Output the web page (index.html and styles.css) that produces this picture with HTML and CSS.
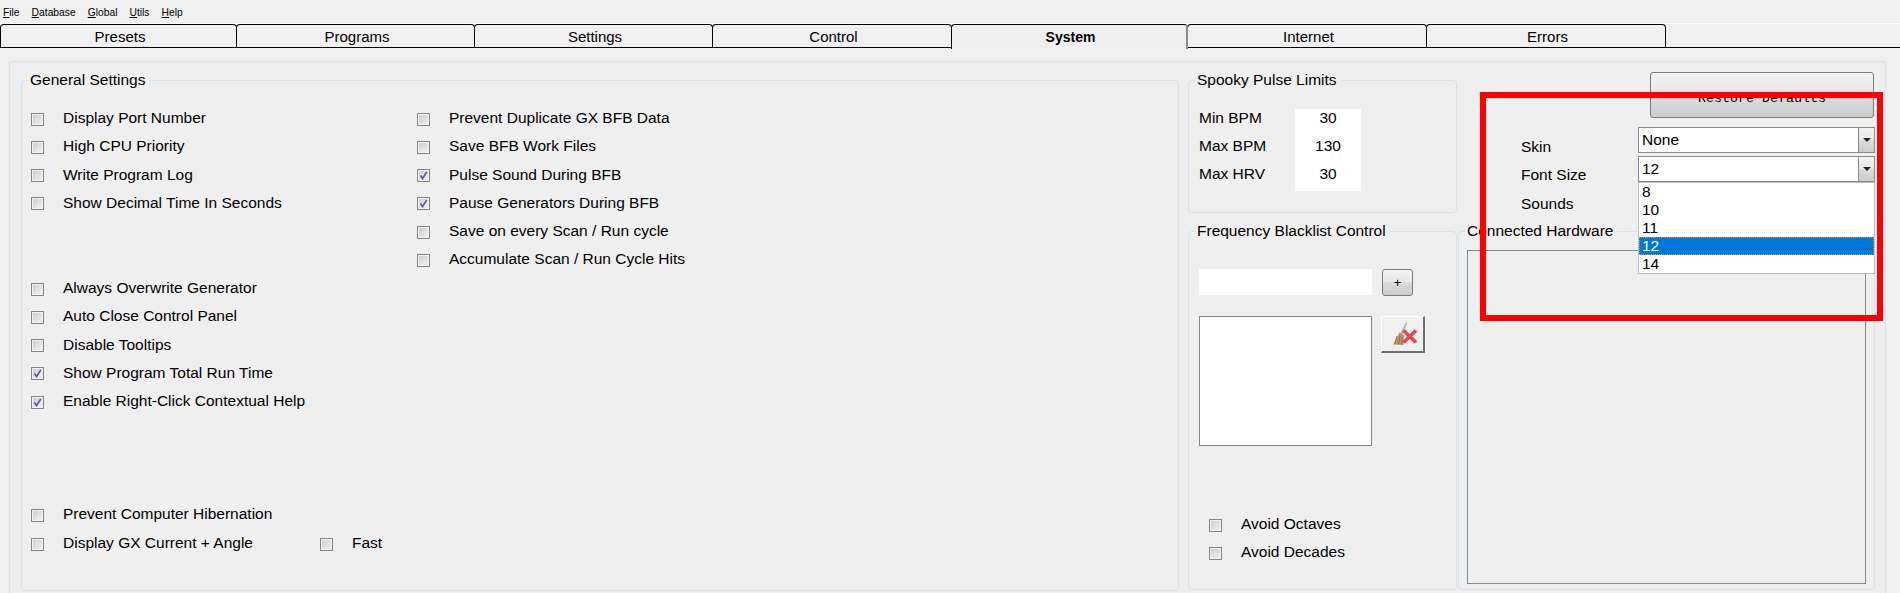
FILE: index.html
```html
<!DOCTYPE html>
<html lang="en">
<head>
<meta charset="utf-8">
<title>System</title>
<link rel="stylesheet" href="styles.css">
</head>
<body>
<nav class="menu">
  <span><u>F</u>ile</span><span><u>D</u>atabase</span><span><u>G</u>lobal</span><span><u>U</u>tils</span><span><u>H</u>elp</span>
</nav>
<div class="tabs">
  <div class="tab">Presets</div>
  <div class="tab">Programs</div>
  <div class="tab">Settings</div>
  <div class="tab">Control</div>
  <div class="tab active">System</div>
  <div class="tab">Internet</div>
  <div class="tab">Errors</div>
</div>
<main class="panel">
  <section class="group general">
    <div class="legend">General Settings</div>
    <div class="general-cols">
      <div class="col col-a">
        <div class="row"><span class="box"></span><span class="txt">Display Port Number</span></div>
        <div class="row"><span class="box"></span><span class="txt">High CPU Priority</span></div>
        <div class="row"><span class="box"></span><span class="txt">Write Program Log</span></div>
        <div class="row"><span class="box"></span><span class="txt">Show Decimal Time In Seconds</span></div>
        <div class="row sep-a"><span class="box"></span><span class="txt">Always Overwrite Generator</span></div>
        <div class="row"><span class="box"></span><span class="txt">Auto Close Control Panel</span></div>
        <div class="row"><span class="box"></span><span class="txt">Disable Tooltips</span></div>
        <div class="row"><span class="box checked"><svg viewBox="0 0 11 11"><path d="M2.5 5.5 L4.6 8.5 L8.8 1.8" fill="none" stroke="#4d5a9c" stroke-width="1.6"/></svg></span><span class="txt">Show Program Total Run Time</span></div>
        <div class="row"><span class="box checked"><svg viewBox="0 0 11 11"><path d="M2.5 5.5 L4.6 8.5 L8.8 1.8" fill="none" stroke="#4d5a9c" stroke-width="1.6"/></svg></span><span class="txt">Enable Right-Click Contextual Help</span></div>
        <div class="row sep-b"><span class="box"></span><span class="txt">Prevent Computer Hibernation</span></div>
        <div class="row tall">
          <div class="pair"><span class="box"></span><span class="txt">Display GX Current + Angle</span></div>
          <span class="box"></span><span class="txt">Fast</span>
        </div>
      </div>
      <div class="col">
        <div class="row"><span class="box"></span><span class="txt">Prevent Duplicate GX BFB Data</span></div>
        <div class="row"><span class="box"></span><span class="txt">Save BFB Work Files</span></div>
        <div class="row"><span class="box checked"><svg viewBox="0 0 11 11"><path d="M2.5 5.5 L4.6 8.5 L8.8 1.8" fill="none" stroke="#4d5a9c" stroke-width="1.6"/></svg></span><span class="txt">Pulse Sound During BFB</span></div>
        <div class="row"><span class="box checked"><svg viewBox="0 0 11 11"><path d="M2.5 5.5 L4.6 8.5 L8.8 1.8" fill="none" stroke="#4d5a9c" stroke-width="1.6"/></svg></span><span class="txt">Pause Generators During BFB</span></div>
        <div class="row"><span class="box"></span><span class="txt">Save on every Scan / Run cycle</span></div>
        <div class="row"><span class="box"></span><span class="txt">Accumulate Scan / Run Cycle Hits</span></div>
      </div>
    </div>
  </section>

  <div class="right">
    <section class="group spooky">
      <div class="legend">Spooky Pulse Limits</div>
      <div class="limits">
        <div class="limit-names"><div>Min BPM</div><div>Max BPM</div><div>Max HRV</div></div>
        <div class="limit-values"><div>30</div><div>130</div><div>30</div></div>
      </div>
    </section>

    <section class="options">
      <button class="restore" type="button">Restore Defaults</button>
      <div class="option-body">
        <div class="option-names"><div>Skin</div><div>Font Size</div><div>Sounds</div></div>
        <div class="combos">
          <div class="combo"><span class="combo-text">None</span><span class="combo-arrow"><i></i></span></div>
          <div class="combo open"><span class="combo-text">12</span><span class="combo-arrow"><i></i></span>
            <ul class="dropdown">
              <li>8</li><li>10</li><li>11</li><li class="selected">12</li><li>14</li>
            </ul>
          </div>
        </div>
      </div>
    </section>

    <section class="group freq">
      <div class="legend">Frequency Blacklist Control</div>
      <div class="freq-add">
        <div class="freq-input"></div>
        <button class="plus" type="button">+</button>
      </div>
      <div class="freq-list-row">
        <div class="freq-list"></div>
        <button class="broom" type="button" aria-label="Clear list">
          <svg width="42" height="35" viewBox="0 0 42 35">
            <path d="M24 5 L25.5 6 L20 18 L18 17 Z" fill="#c7b49c"/>
            <path d="M17.5 15.5 L22 18 L21.5 28 L11 27.5 Z" fill="#b9976a"/>
            <path d="M15 19 L13 27 M18 19 L16.5 27.5 M20 20 L19.5 27.5" stroke="#95744a" stroke-width="1" fill="none"/>
            <path d="M21.5 13.5 L34 25.5 M34 13.5 L21.5 25.5" stroke="#df4850" stroke-width="3.6" fill="none"/>
          </svg>
        </button>
      </div>
      <div class="avoid">
        <div class="row"><span class="box"></span><span class="txt">Avoid Octaves</span></div>
        <div class="row"><span class="box"></span><span class="txt">Avoid Decades</span></div>
      </div>
    </section>

    <section class="group hardware">
      <div class="legend">Connected Hardware</div>
      <div class="hw-box"></div>
    </section>
  </div>
</main>
<div class="highlight"></div>
</body>
</html>
```
FILE: styles.css
```css
* { box-sizing: border-box; }
html, body { margin: 0; padding: 0; }
body {
  width: 1900px;
  height: 593px;
  overflow: hidden;
  position: relative;
  background: #f0f0f0;
  color: #000;
  font-family: "Liberation Sans", Arial, sans-serif;
  font-size: 15.5px;
}

.menu {
  height: 24px;
  display: flex;
  gap: 12px;
  padding: 1px 0 0 3px;
  font-size: 10.3px;
  line-height: 23px;
  border-bottom: 1px solid #fff;
}
.menu u { text-decoration: underline; }

.tabs {
  height: 24px;
  display: grid;
  padding-left: 1px;
  grid-template-columns: 236px 238px 238px 239px 236px 239px 239px 1fr;
  border-bottom: 1px solid #000;
}
.tab {
  height: 23px;
  border-top: 1px solid #000;
  border-right: 1px solid #000;
  border-left: 1px solid #000;
  border-radius: 4px 4px 0 0;
  margin-left: -1px;
  padding-left: 3px;
  text-align: center;
  font-size: 15px;
  line-height: 24px;
  background: #f0f0f0;
}
.tab.active {
  position: relative;
  height: 25px;
  font-weight: bold;
  font-size: 14px;
  border-left: 1px solid #000;
  border-right: 2px solid #8a8a8a;
  background: #efefef;
}

.panel {
  margin: 13px 14px 0 9px;
  height: 560px;
  padding: 18px 9px 0 11px;
  border: 1px solid #d9e3ec;
  border-bottom: 0;
  border-radius: 4px 4px 0 0;
  background: #efefef;
  display: flex;
  gap: 9px;
  align-items: flex-start;
}

.group {
  border: 1px solid #d9e3ec;
  border-radius: 4px;
}
.legend {
  width: fit-content;
  height: 18px;
  line-height: 18px;
  margin: -10px 0 0 7px;
  padding: 0 4px 0 1px;
  background: #efefef;
}

.general { width: 1158px; height: 511px; }
.general-cols {
  display: flex;
  margin-top: 15px;
  padding-left: 9px;
}
.col-a { width: 386px; }
.row {
  display: flex;
  align-items: center;
  height: 28.25px;
}
.row.tall { height: 29px; margin-top: 0; }
.sep-a { margin-top: 57px; }
.sep-b { margin-top: 85px; }
.pair { display: flex; align-items: center; width: 289px; }
.box {
  flex: none;
  display: block;
  width: 13px;
  height: 13px;
  margin-top: 2px;
  border: 1px solid #858585;
  background: linear-gradient(135deg, #c9c9c9, #f6f6f6);
  box-shadow: inset 0 0 0 1px #f2f2f2;
}
.box svg { display: block; width: 11px; height: 11px; }
.txt { margin-left: 19px; white-space: nowrap; }

.right {
  display: grid;
  grid-template-columns: 269px 417px;
  grid-template-rows: 133px 359px;
  column-gap: 1px;
  row-gap: 18px;
}

.limits {
  display: flex;
  margin-top: 20px;
  padding-left: 10px;
  line-height: 18px;
}
.limit-names { width: 96px; display: flex; flex-direction: column; gap: 10px; }
.limit-values {
  width: 66px;
  height: 82px;
  background: #fff;
  text-align: center;
  display: flex;
  flex-direction: column;
  gap: 10px;
}

.options { display: flex; flex-direction: column; }
.restore {
  align-self: flex-end;
  width: 224px;
  height: 46px;
  margin: -8px 1px 0 0;
  padding: 7px 0 0;
  border: 1px solid #7c7c7c;
  border-radius: 3px;
  background: linear-gradient(#f2f2f2, #e9e9e9 50%, #dcdcdc 50%, #cdcdcd);
  font-family: "Liberation Mono", "Courier New", monospace;
  font-size: 13.33px;
  font-weight: normal;
  color: #000;
}
.option-body { display: flex; }
.option-names {
  width: 179px;
  padding: 20px 0 0 63px;
  line-height: 18px;
  display: flex;
  flex-direction: column;
  gap: 10.3px;
}
.combos {
  width: 237px;
  margin-left: 1px;
  padding-top: 9px;
  display: flex;
  flex-direction: column;
  gap: 3px;
}
.combo {
  position: relative;
  height: 26px;
  border: 1px solid #868a91;
  background: #fff;
  display: flex;
  justify-content: space-between;
  line-height: 24px;
}
.combo-text { padding-left: 3px; }
.combo-arrow {
  width: 16px;
  border-left: 1px solid #868a91;
  background: linear-gradient(#f2f2f2, #e9e9e9 50%, #dcdcdc 50%, #cdcdcd);
  display: flex;
  align-items: center;
  justify-content: center;
}
.combo-arrow i {
  display: block;
  width: 0;
  height: 0;
  border-left: 4px solid transparent;
  border-right: 4px solid transparent;
  border-top: 4px solid #222;
}
.dropdown {
  position: absolute;
  left: -1px;
  top: 25px;
  width: 237px;
  margin: 0;
  padding: 0;
  list-style: none;
  height: 92px;
  background: #fff;
  border: 1px solid #bdbdbd;
}
.dropdown li {
  height: 18px;
  line-height: 18px;
  padding-left: 3px;
}
.dropdown li.selected {
  background: #0078d7;
  color: #fff;
  outline: 1px dotted #e58a2e;
  outline-offset: -1px;
}

.freq-add {
  display: flex;
  margin-top: 29px;
  padding-left: 10px;
}
.freq-input { width: 173px; height: 26px; background: #fff; }
.plus {
  width: 31px;
  height: 27px;
  margin: 0 0 0 10px;
  padding: 0;
  border: 1px solid #7c7c7c;
  border-radius: 3px;
  background: linear-gradient(#f2f2f2, #e9e9e9 50%, #dcdcdc 50%, #cdcdcd);
  font-family: "Liberation Sans", Arial, sans-serif;
  font-size: 13px;
  color: #000;
}
.freq-list-row {
  display: flex;
  margin-top: 20px;
  padding-left: 10px;
}
.freq-list {
  width: 173px;
  height: 130px;
  background: #fff;
  border: 1px solid #808890;
}
.broom {
  width: 44px;
  height: 37px;
  margin-left: 9px;
  padding: 0;
  background: #f0f0f0;
  border-style: solid;
  border-width: 1px 2px 2px 1px;
  border-color: #fff #6f6f6f #6f6f6f #fff;
}
.broom svg { display: block; }
.avoid { margin-top: 64px; padding-left: 20px; }

.hw-box {
  width: 399px;
  height: 334px;
  margin: 10px 0 0 8px;
  border: 1px solid #808890;
}

.highlight {
  position: absolute;
  left: 1480px;
  top: 92px;
  width: 403px;
  height: 229px;
  border: 6px solid #f00;
  z-index: 5;
}
```
